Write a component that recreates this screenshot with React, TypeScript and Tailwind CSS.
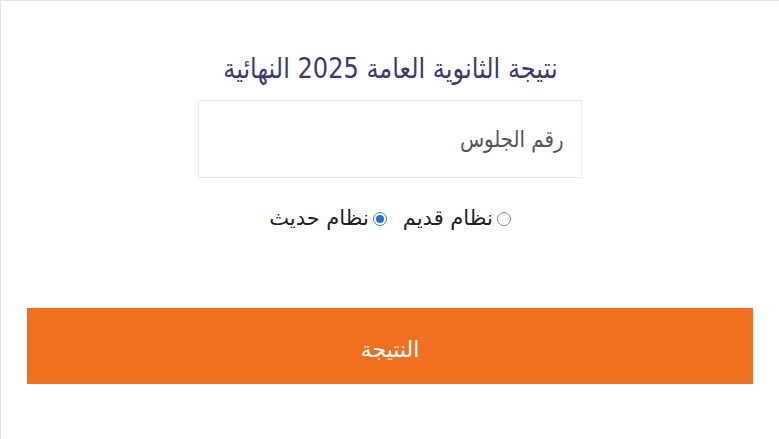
export default function App() {
  return (
    <div dir="rtl" className="w-[779px] h-[439px] bg-white border-t border-l border-[#e3e3e3] overflow-hidden" style={{ fontFamily: "'DejaVu Sans', 'Noto Sans', sans-serif" }}>
      <div className="flex flex-col items-center pt-[50px]">
        <h1 className="text-[28px] leading-[36px] text-[#3c3a6a] scale-x-[0.86]">نتيجة الثانوية العامة 2025 النهائية</h1>
        <div className="mt-[13px] w-[384px] h-[78px] border border-[#ececec] flex items-center px-[17px]">
          <span className="text-[23px] text-[#555] inline-block scale-x-[0.86] origin-right">رقم الجلوس</span>
        </div>
        <div className="mt-[25px] flex items-center gap-2 text-[21px] text-[#222]">
          <label className="flex items-center gap-1">
            <span className="w-[14px] h-[14px] rounded-full border border-[#888] bg-white" />
            <span>نظام قديم</span>
          </label>
          <label className="flex items-center gap-1 mr-2">
            <span className="w-[14px] h-[14px] rounded-full border border-[#3b82c4] bg-white flex items-center justify-center">
              <span className="w-[8px] h-[8px] rounded-full bg-[#1e73d0]" />
            </span>
            <span>نظام حديث</span>
          </label>
        </div>
      </div>
      <div className="mt-[73px] mx-[26px] h-[76px] bg-[#f07022] flex items-center justify-center pt-[8px] text-white text-[22px]">
        النتيجة
      </div>
    </div>
  );
}
